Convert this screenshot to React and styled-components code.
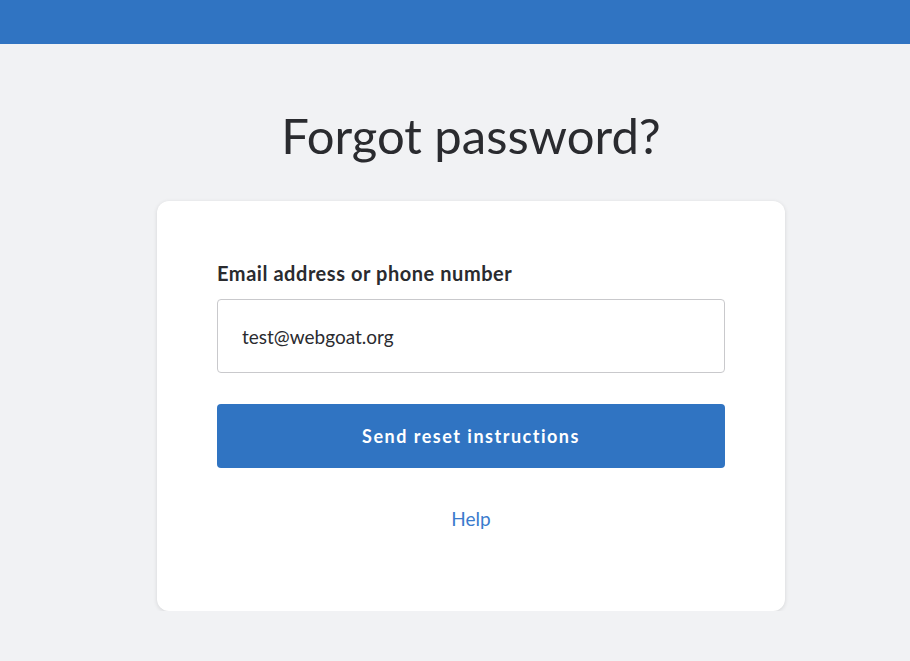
import React, { useState } from 'react';
import styled, { createGlobalStyle } from 'styled-components';

const GlobalStyle = createGlobalStyle`
  html, body {
    margin: 0;
    padding: 0;
    background: #f1f2f4;
    font-family: Lato, "Open Sans", "Liberation Sans", sans-serif;
    color: #2a2b2f;
  }
  * { box-sizing: border-box; }
`;

const TopBar = styled.header`
  height: 44px;
  background: #3074c2;
`;

const Main = styled.main`
  display: flex;
  flex-direction: column;
  align-items: center;
  padding: 62px 0 0 32px;
`;

const Title = styled.h1`
  margin: 0 0 37px;
  font-size: 49px;
  line-height: 58px;
  font-weight: 400;
  color: #2a2b2f;
`;

const Card = styled.form`
  width: 628px;
  background: #fff;
  border-radius: 12px;
  box-shadow: 0 1px 4px rgba(0, 0, 0, 0.12);
  padding: 60px 60px 80px;
  display: flex;
  flex-direction: column;
`;

const Label = styled.label`
  font-size: 20px;
  font-weight: 700;
  line-height: 24px;
  letter-spacing: 0.55px;
  margin-bottom: 14px;
  color: #2a2b2f;
`;

const Input = styled.input`
  height: 74px;
  border: 1px solid #c9c9cc;
  border-radius: 4px;
  padding: 0 24px;
  font: inherit;
  font-size: 19px;
  color: #2a2b2f;
  outline: none;
  margin-bottom: 31px;
`;

const SubmitButton = styled.button`
  height: 64px;
  border: none;
  border-radius: 4px;
  background: #3074c2;
  color: #fff;
  font: inherit;
  font-size: 18px;
  font-weight: 700;
  letter-spacing: 1.5px;
  cursor: pointer;
  margin-bottom: 39px;
`;

const HelpLink = styled.a`
  align-self: center;
  font-size: 19px;
  line-height: 24px;
  color: #3a7bcd;
  text-decoration: none;
`;

export default function App() {
  const [email, setEmail] = useState('test@webgoat.org');

  return (
    <>
      <GlobalStyle />
      <TopBar />
      <Main>
        <Title>Forgot password?</Title>
        <Card onSubmit={e => e.preventDefault()}>
          <Label htmlFor="email">Email address or phone number</Label>
          <Input id="email" value={email} onChange={e => setEmail(e.target.value)} />
          <SubmitButton type="submit">Send reset instructions</SubmitButton>
          <HelpLink href="#">Help</HelpLink>
        </Card>
      </Main>
    </>
  );
}
